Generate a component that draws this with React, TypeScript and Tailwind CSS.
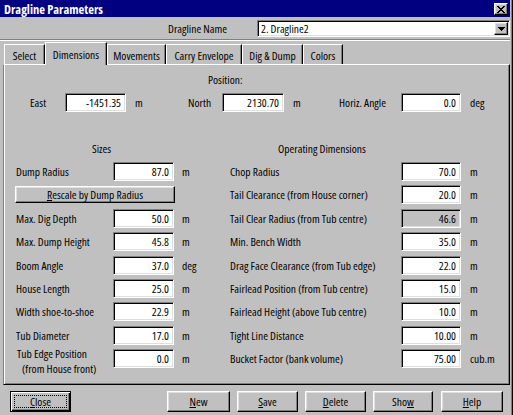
import React from "react";

const FONT = "font-['Open_Sans','Liberation_Sans',sans-serif] [font-stretch:condensed]";

const SUNKEN =
  "box-border border border-t-[#808080] border-l-[#808080] border-b-white border-r-white shadow-[inset_1px_1px_0_#000,inset_-1px_-1px_0_#dfdfdf]";
const RAISED =
  "box-border border border-t-white border-l-white border-b-black border-r-black shadow-[inset_-1px_-1px_0_#808080,inset_1px_1px_0_#dfdfdf] bg-[#c0c0c0]";

function Field({ value, w, disabled = false }: { value: string; w: string; disabled?: boolean }) {
  return (
    <div
      className={`${SUNKEN} ${w} h-[19px] shrink-0 flex items-center justify-end pr-[4px] ${
        disabled ? "bg-[#c0c0c0]" : "bg-white"
      }`}
    >
      {value}
    </div>
  );
}

function XGlyph() {
  const rows = [
    [0, 2, 6, 2],
    [1, 2, 5, 2],
    [2, 4],
    [3, 2],
    [2, 4],
    [1, 2, 5, 2],
    [0, 2, 6, 2],
  ];
  return (
    <svg width="8" height="7" viewBox="0 0 8 7" shapeRendering="crispEdges">
      {rows.map((r, y) => (
        <g key={y}>
          <rect x={r[0]} y={y} width={r[1]} height={1} fill="#000" />
          {r.length > 2 && <rect x={r[2]} y={y} width={r[3]} height={1} fill="#000" />}
        </g>
      ))}
    </svg>
  );
}

function DownArrow() {
  return (
    <svg width="7" height="4" viewBox="0 0 7 4" shapeRendering="crispEdges">
      <rect x="0" y="0" width="7" height="1" fill="#000" />
      <rect x="1" y="1" width="5" height="1" fill="#000" />
      <rect x="2" y="2" width="3" height="1" fill="#000" />
      <rect x="3" y="3" width="1" height="1" fill="#000" />
    </svg>
  );
}

type Row = {
  left: string;
  leftVal?: string;
  leftUnit?: string;
  right: string;
  rightVal: string;
  rightUnit: string;
  rightDisabled?: boolean;
  kind?: "button" | "twoLine";
};

const rows: Row[] = [
  { left: "Dump Radius", leftVal: "87.0", leftUnit: "m", right: "Chop Radius", rightVal: "70.0", rightUnit: "m" },
  { left: "", kind: "button", right: "Tail Clearance (from House corner)", rightVal: "20.0", rightUnit: "m" },
  { left: "Max. Dig Depth", leftVal: "50.0", leftUnit: "m", right: "Tail Clear Radius (from Tub centre)", rightVal: "46.6", rightUnit: "m", rightDisabled: true },
  { left: "Max. Dump Height", leftVal: "45.8", leftUnit: "m", right: "Min. Bench Width", rightVal: "35.0", rightUnit: "m" },
  { left: "Boom Angle", leftVal: "37.0", leftUnit: "deg", right: "Drag Face Clearance (from Tub edge)", rightVal: "22.0", rightUnit: "m" },
  { left: "House Length", leftVal: "25.0", leftUnit: "m", right: "Fairlead Position (from Tub centre)", rightVal: "15.0", rightUnit: "m" },
  { left: "Width shoe-to-shoe", leftVal: "22.9", leftUnit: "m", right: "Fairlead Height (above Tub centre)", rightVal: "10.0", rightUnit: "m" },
  { left: "Tub Diameter", leftVal: "17.0", leftUnit: "m", right: "Tight Line Distance", rightVal: "10.00", rightUnit: "m" },
  { left: "", kind: "twoLine", leftVal: "0.0", leftUnit: "m", right: "Bucket Factor (bank volume)", rightVal: "75.00", rightUnit: "cub.m" },
];

const tabs: { label: string; w: string; active?: boolean }[] = [
  { label: "Select", w: "w-[41px]" },
  { label: "Dimensions", w: "w-[62px]", active: true },
  { label: "Movements", w: "w-[59px]" },
  { label: "Carry Envelope", w: "w-[76px]" },
  { label: "Dig & Dump", w: "w-[61px]" },
  { label: "Colors", w: "w-[40px]" },
];

function Btn({ children, w, ml, isDefault = false }: { children: React.ReactNode; w: string; ml: string; isDefault?: boolean }) {
  if (isDefault) {
    return (
      <div
        className={`${w} ${ml} h-[21px] shrink-0 relative box-border border border-black shadow-[inset_1px_1px_0_#fff,inset_-1px_-1px_0_#000,inset_-2px_-2px_0_#808080] bg-[#c0c0c0] flex items-center justify-center`}
      >
        <div className="absolute inset-[3px] border border-dotted border-black" />
        <span className="relative">{children}</span>
      </div>
    );
  }
  return (
    <div className={`${RAISED} ${w} ${ml} h-[21px] shrink-0 flex items-center justify-center`}>{children}</div>
  );
}

export default function App() {
  return (
    <div
      className={`${FONT} text-[11.5px] leading-[13px] text-black w-[513px] h-[415px] bg-[#c0c0c0] overflow-hidden flex flex-col shadow-[inset_-1px_0_0_#000,inset_-2px_0_0_#808080]`}
    >
      {/* Title bar */}
      <div className="w-[510px] h-[17px] shrink-0 bg-[#000080] flex items-start justify-between pl-[4px] pr-[2px]">
        <span className="text-white font-bold text-[12.5px] leading-[13px] pt-[3px]">Dragline Parameters</span>
        <div className={`${RAISED} w-[14px] h-[12px] mt-[3px] flex items-center justify-center`}>
          <XGlyph />
        </div>
      </div>

      {/* Name row */}
      <div className="mt-[3px] h-[17px] shrink-0 flex items-center pl-[168px]">
        <div className="w-[89px]">Dragline Name</div>
        <div className={`${SUNKEN} w-[253px] h-[17px] bg-white flex items-center justify-between pl-[3px] pr-[1px]`}>
          <span>2. Dragline2</span>
          <div className={`${RAISED} w-[14px] h-[13px] flex items-center justify-center`}>
            <DownArrow />
          </div>
        </div>
      </div>

      {/* separator */}
      <div className="mt-[2px] w-[510px] h-[2px] shrink-0 border-t border-t-[#808080] border-b border-b-white box-border" />

      {/* Tabs */}
      <div className="mt-[1px] h-[22px] shrink-0 flex items-end pl-[4px]">
        {tabs.map((t) =>
          t.active ? (
            <div
              key={t.label}
              className={`${t.w} h-[23px] -mb-[1px] relative z-10 bg-[#c0c0c0] box-border border-l border-t border-white border-r border-r-black shadow-[inset_-1px_0_0_#808080] flex justify-center pt-[5px] whitespace-nowrap`}
            >
              {t.label}
            </div>
          ) : (
            <div
              key={t.label}
              className={`${t.w} h-[20px] box-border border-l border-t border-white border-r border-r-black shadow-[inset_-1px_0_0_#808080] flex justify-center pt-[4px] whitespace-nowrap`}
            >
              {t.label}
            </div>
          )
        )}
      </div>

      {/* Panel */}
      <div className="ml-[3px] w-[507px] h-[321px] shrink-0 box-border border-l border-l-[#808080] border-t border-t-white border-r border-r-black border-b border-b-black shadow-[inset_1px_0_0_#fff,inset_-1px_-1px_0_#808080] flex flex-col">
        <div className="mt-[8px] pl-[204px]">Position:</div>

        <div className="mt-[7px] h-[19px] flex items-center">
          <div className="w-[26px] shrink-0" />
          <div className="w-[35px] shrink-0">East</div>
          <Field value="-1451.35" w="w-[61px]" />
          <div className="w-[62px] shrink-0 pl-[9px]">m</div>
          <div className="w-[34px] shrink-0">North</div>
          <Field value="2130.70" w="w-[62px]" />
          <div className="w-[55px] shrink-0 pl-[9px]">m</div>
          <div className="w-[62px] shrink-0 whitespace-nowrap">Horiz. Angle</div>
          <Field value="0.0" w="w-[60px]" />
          <div className="pl-[9px]">deg</div>
        </div>

        <div className="mt-[30px] flex">
          <div className="w-[88px] shrink-0" />
          <div className="w-[186px] shrink-0">Sizes</div>
          <div>Operating Dimensions</div>
        </div>

        <div className="mt-[7px] flex flex-col gap-[4.4px]">
          {rows.map((r, i) => (
            <div key={i} className="h-[19px] flex items-center">
              {r.kind === "button" ? (
                <>
                  <div className="w-[11px] shrink-0" />
                  <div className={`${RAISED} w-[160px] h-[17px] shrink-0 flex items-center justify-center`}>
                    <span>
                      <span className="underline underline-offset-[1px]">R</span>escale by Dump Radius
                    </span>
                  </div>
                  <div className="w-[55px] shrink-0" />
                </>
              ) : r.kind === "twoLine" ? (
                <>
                  <div className="w-[12px] shrink-0" />
                  <div className="w-[97px] shrink-0 self-start -mt-[3px] leading-[15px] whitespace-nowrap">
                    <div className="pl-[1px]">Tub Edge Position</div>
                    <div className="pl-[6px]">(from House front)</div>
                  </div>
                  <Field value={r.leftVal!} w="w-[61px]" />
                  <div className="w-[56px] shrink-0 pl-[8px]">{r.leftUnit}</div>
                </>
              ) : (
                <>
                  <div className="w-[12px] shrink-0" />
                  <div className="w-[97px] shrink-0 whitespace-nowrap">{r.left}</div>
                  <Field value={r.leftVal!} w="w-[61px]" />
                  <div className="w-[56px] shrink-0 pl-[8px]">{r.leftUnit}</div>
                </>
              )}
              <div className="w-[171px] shrink-0 whitespace-nowrap">{r.right}</div>
              <Field value={r.rightVal} w="w-[60px]" disabled={r.rightDisabled} />
              <div className="pl-[9px]">{r.rightUnit}</div>
            </div>
          ))}
        </div>
      </div>

      {/* Bottom buttons */}
      <div className="mt-[6px] h-[21px] shrink-0 flex pl-[10px]">
        <Btn w="w-[61px]" ml="ml-0" isDefault>
          <span className="underline underline-offset-[1px]">C</span>lose
        </Btn>
        <Btn w="w-[63px]" ml="ml-[96px]">
          <span className="underline underline-offset-[1px]">N</span>ew
        </Btn>
        <Btn w="w-[61px]" ml="ml-[7px]">
          <span className="underline underline-offset-[1px]">S</span>ave
        </Btn>
        <Btn w="w-[61px]" ml="ml-[7px]">
          <span className="underline underline-offset-[1px]">D</span>elete
        </Btn>
        <Btn w="w-[60px]" ml="ml-[7px]">
          Sho<span className="underline underline-offset-[1px]">w</span>
        </Btn>
        <Btn w="w-[62px]" ml="ml-[8px]">
          <span className="underline underline-offset-[1px]">H</span>elp
        </Btn>
      </div>
    </div>
  );
}
